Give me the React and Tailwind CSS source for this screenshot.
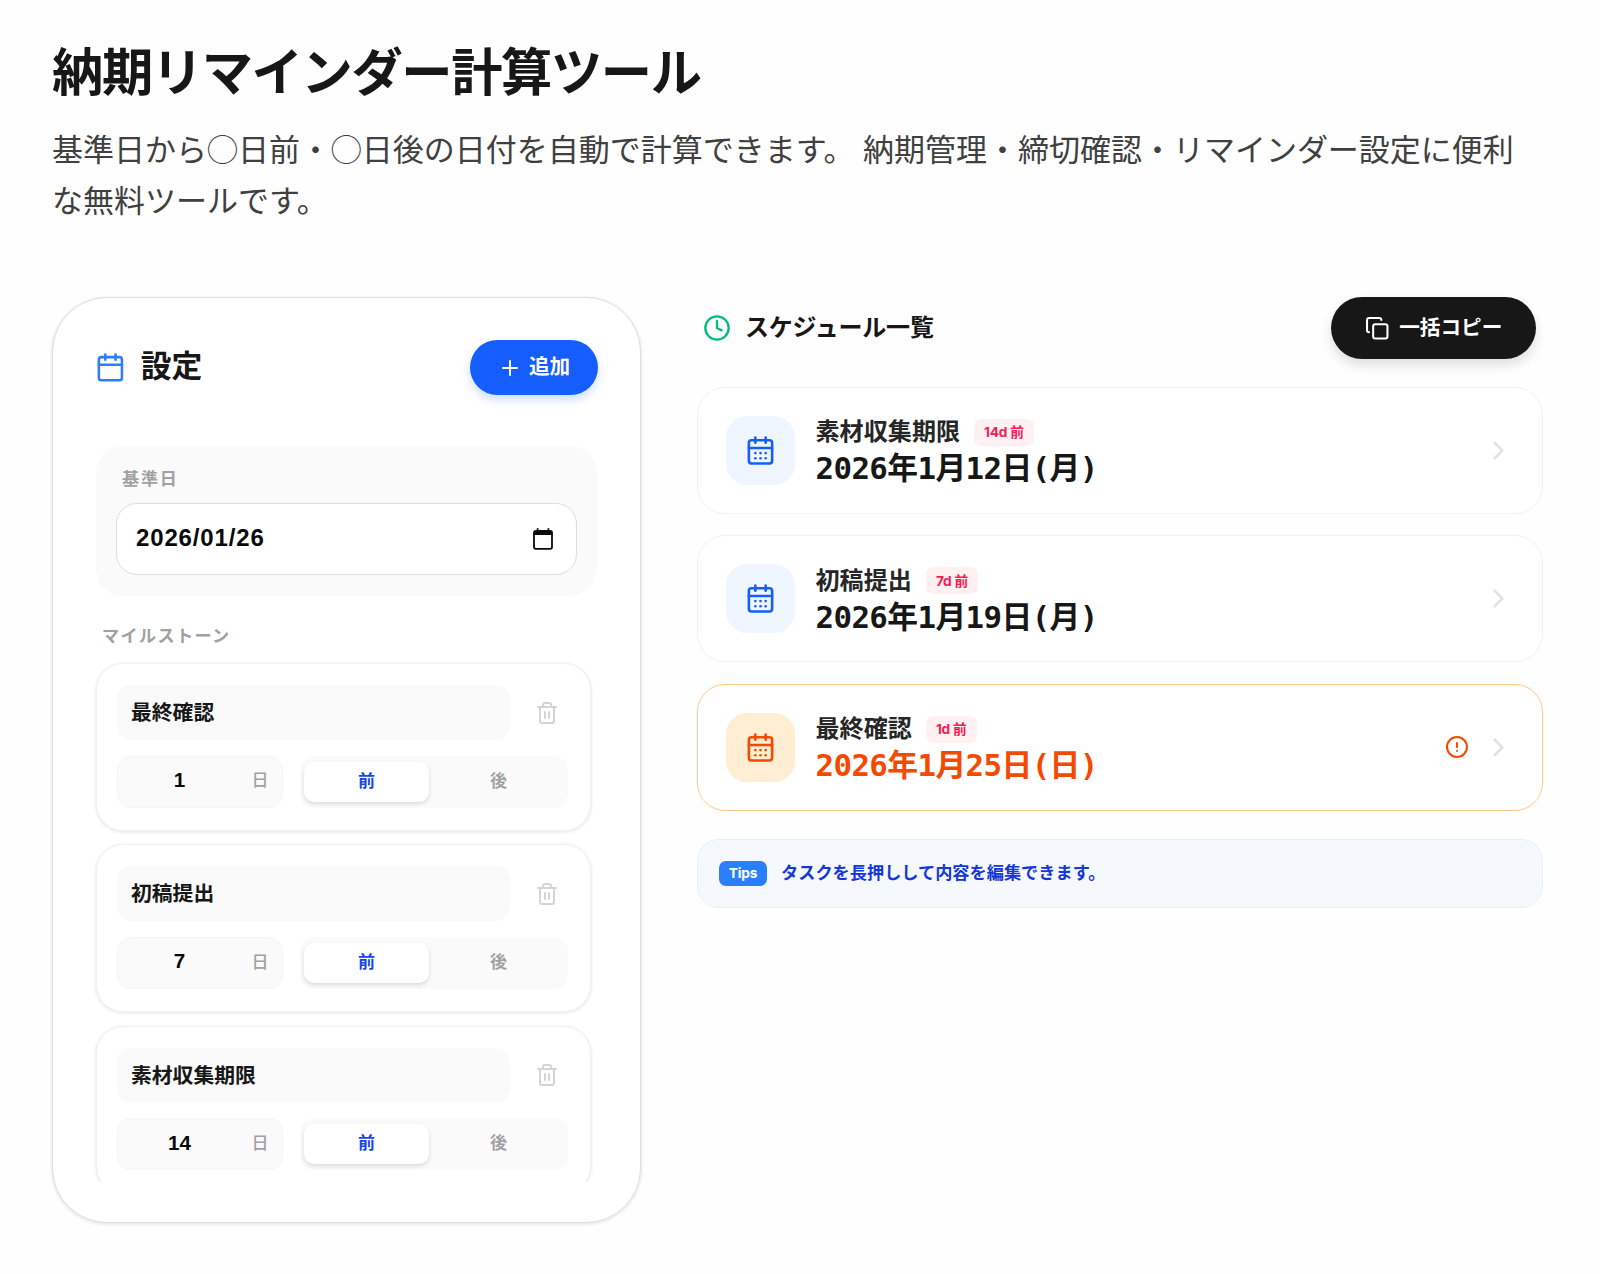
import React, { useState } from "react";
import {
  Calendar,
  CalendarDays,
  ChevronRight,
  CircleAlert,
  Clock,
  Copy,
  Plus,
  Trash2,
} from "lucide-react";

const initialMilestones = [
  { id: 1, name: "最終確認", days: 1, direction: "before" },
  { id: 2, name: "初稿提出", days: 7, direction: "before" },
  { id: 3, name: "素材収集期限", days: 14, direction: "before" },
];

const schedule = [
  { id: 3, name: "素材収集期限", badge: "14d 前", date: "2026年1月12日(月)" },
  { id: 2, name: "初稿提出", badge: "7d 前", date: "2026年1月19日(月)" },
  {
    id: 1,
    name: "最終確認",
    badge: "1d 前",
    date: "2026年1月25日(日)",
    warning: true,
  },
];

const DatePickerIcon = () => (
  <svg width="20" height="22" viewBox="0 0 20 22" fill="none">
    <rect x="1" y="3" width="18" height="17.8" rx="1.8" stroke="#0a0a0a" strokeWidth="1.8" />
    <path d="M1 3h18v4H1z" fill="#0a0a0a" />
    <path d="M4.6 0.3v3M15.4 0.3v3" stroke="#0a0a0a" strokeWidth="1.8" />
  </svg>
);

const MilestoneCard = ({ milestone, onToggle }) => {
  const before = milestone.direction === "before";
  const active = "bg-white text-[#1447e6] shadow-[0_2px_4px_rgba(0,0,0,0.13)]";
  const inactive = "text-[#a1a1a1]";

  return (
    <div className="h-[167.5px] shrink-0 rounded-[27px] border border-[#f1f1f1] bg-white px-5 pt-[21px] shadow-[0_1px_3px_1px_rgba(0,0,0,0.07)]">
      <div className="flex items-center">
        <div className="flex h-[55px] w-[393px] items-center rounded-[14px] bg-[#fafafa] pl-[14px] text-[20.8px] font-bold text-[#171717]">
          {milestone.name}
        </div>
        <button className="ml-[24.5px] text-[#d4d4d4]">
          <Trash2 size={24} strokeWidth={2} />
        </button>
      </div>
      <div className="mt-[15.5px] flex gap-[17px]">
        <div className="flex h-[52px] w-[166px] items-center rounded-[14px] border border-[#f5f5f5] bg-[#fafafa]">
          <span className="w-[123px] pb-[2px] text-center font-['Liberation_Sans'] text-[20.6px] font-bold text-[#0a0a0a]">
            {milestone.days}
          </span>
          <span className="ml-[10.5px] pb-px text-[17px] font-medium text-[#a1a1a1]">
            日
          </span>
        </div>
        <div className="flex h-[52px] w-[268px] items-center rounded-[14px] bg-[#fafafa] px-[4px] text-[17px] font-bold">
          <button
            onClick={() => onToggle(milestone.id, "before")}
            className={`h-[40px] w-[125px] rounded-[10px] ${before ? active : inactive}`}
          >
            前
          </button>
          <button
            onClick={() => onToggle(milestone.id, "after")}
            className={`ml-[7px] h-[40px] w-[125px] rounded-[10px] ${before ? inactive : active}`}
          >
            後
          </button>
        </div>
      </div>
    </div>
  );
};

const ScheduleCard = ({ item }) => (
  <div
    className={`flex h-[127px] items-center rounded-[28px] border bg-white pr-[28px] pl-[28px] ${
      item.warning ? "border-[#ffc98c]" : "border-[#f1f1f1]"
    }`}
  >
    <div
      className={`flex h-[69px] w-[69px] items-center justify-center rounded-[21px] ${
        item.warning ? "bg-[#ffedd4] text-[#f54900]" : "bg-[#eff6ff] text-[#155dfc]"
      }`}
    >
      <CalendarDays size={31} strokeWidth={2} />
    </div>
    <div className="ml-[20.5px] pt-[3px]">
      <div className="flex h-[34px] items-center">
        <span className="text-[24.1px] font-bold text-[#262626]">{item.name}</span>
        <span className="ml-[14px] flex h-[27px] items-center rounded-[7px] bg-[#fff1f2] px-[10px] font-['Inter','Noto_Sans_CJK_JP',sans-serif] text-[13.7px] font-bold tracking-[-0.2px] text-[#f51d55]">
          {item.badge}
        </span>
      </div>
      <div
        className={`font-['DejaVu_Sans_Mono','Noto_Sans_CJK_JP',monospace] text-[30.8px] leading-[39px] font-bold tracking-[-0.6px] ${
          item.warning ? "text-[#f54900]" : "text-[#171717]"
        }`}
      >
        {item.date}
      </div>
    </div>
    <div className="ml-auto flex items-center gap-[14px]">
      {item.warning && (
        <CircleAlert size={24} strokeWidth={2} className="text-[#f54900]" />
      )}
      <ChevronRight size={31} strokeWidth={2} className="text-[#e2e2e2]" />
    </div>
  </div>
);

const App = () => {
  const [milestones, setMilestones] = useState(initialMilestones);

  const handleToggle = (id, direction) => {
    setMilestones((prev) =>
      prev.map((m) => (m.id === id ? { ...m, direction } : m))
    );
  };

  const handleAdd = () => {
    setMilestones((prev) => [
      { id: Date.now(), name: "新規タスク", days: 1, direction: "before" },
      ...prev,
    ]);
  };

  return (
    <div
      lang="ja"
      className="h-[1274px] overflow-hidden bg-[#fefefe] px-[52px] pt-[38px] font-['Liberation_Sans','Noto_Sans_CJK_JP',sans-serif] text-[#171717]"
    >
      {/* Page heading */}
      <h1 className="text-[51.3px] leading-[72px] font-bold tracking-[-1.4px]">
        納期リマインダー計算ツール
      </h1>
      <p className="mt-[16px] w-[1480px] text-[30.99px] leading-[50.5px] text-[#404040]">
        基準日から◯日前・◯日後の日付を自動で計算できます。 納期管理・締切確認・リマインダー設定に便利な無料ツールです。
      </p>

      <div className="mt-[70px] flex">
        {/* Settings panel */}
        <section className="h-[926px] w-[589px] shrink-0 rounded-[55px] border border-[#dedede] bg-white px-[43px] pt-[42px] shadow-[0_1px_3px_1px_rgba(0,0,0,0.08)]">
          <div className="flex h-[55px] items-center justify-between">
            <h2 className="-ml-px flex items-center gap-[15px] text-[30.8px] font-bold">
              <Calendar size={30.8} strokeWidth={2} className="text-[#2b7fff]" />
              設定
            </h2>
            <button
              onClick={handleAdd}
              className="mr-[-1px] flex h-[55px] w-[128px] items-center justify-center gap-[7px] rounded-full bg-[#155dfc] text-[20.6px] font-bold text-white shadow-[0_5px_10px_rgba(21,93,252,0.2)]"
            >
              <Plus size={24} strokeWidth={2} />
              追加
            </button>
          </div>

          <div className="mt-[51px] h-[150px] rounded-[27px] bg-[#fafafa] px-[20px] pt-[21px]">
            <div className="pl-[6px] text-[17.1px] leading-[26px] font-bold tracking-[1.8px] text-[#a1a1a1]">
              基準日
            </div>
            <div className="mt-[10px] flex h-[72px] items-center justify-between rounded-[21px] border border-[#dedede] bg-white pr-[23px] pl-[19px]">
              <span className="pb-[2px] text-[24px] font-bold tracking-[0.85px] text-[#0a0a0a]">
                2026/01/26
              </span>
              <DatePickerIcon />
            </div>
          </div>

          <div className="mt-[28px] pl-[6px] text-[17.1px] leading-[26px] font-bold tracking-[1.4px] text-[#a1a1a1]">
            マイルストーン
          </div>
          <div className="mt-[9px] -ml-[6px] flex h-[523px] flex-col gap-[13.8px] overflow-hidden px-[6px] pt-[4px]">
            {milestones.map((m) => (
              <MilestoneCard key={m.id} milestone={m} onToggle={handleToggle} />
            ))}
          </div>
        </section>

        {/* Schedule list */}
        <section className="ml-[56px] w-[846px] shrink-0">
          <div className="flex h-[62px] items-center justify-between pr-[7px] pl-[6px]">
            <h2 className="flex items-center gap-[14px] text-[24px] font-bold tracking-[-0.2px]">
              <Clock size={28} strokeWidth={2} className="text-[#00bc7d]" />
              スケジュール一覧
            </h2>
            <button className="flex h-[62px] w-[205px] items-center justify-center gap-[10px] rounded-full bg-[#171717] text-[20.6px] font-bold text-white shadow-[0_6px_12px_rgba(0,0,0,0.13)]">
              <Copy size={24.5} strokeWidth={2} />
              一括コピー
            </button>
          </div>

          <div className="mt-[27.8px] flex flex-col gap-[21.5px]">
            {schedule.map((item) => (
              <ScheduleCard key={item.id} item={item} />
            ))}
          </div>

          <div className="mt-[28px] flex h-[69px] items-center rounded-[22px] border border-[#e6effb] bg-[#f5f9fe] pl-[21px]">
            <span className="flex h-[25px] w-[48px] items-center justify-center rounded-[7px] bg-[#2b7fff] font-['Inter'] text-[13.7px] font-bold tracking-[-0.2px] text-white">
              Tips
            </span>
            <span className="ml-[14px] pt-px text-[17.2px] font-bold text-[#1437d8]">
              タスクを長押しして内容を編集できます。
            </span>
          </div>
        </section>
      </div>
    </div>
  );
};

export default App;
